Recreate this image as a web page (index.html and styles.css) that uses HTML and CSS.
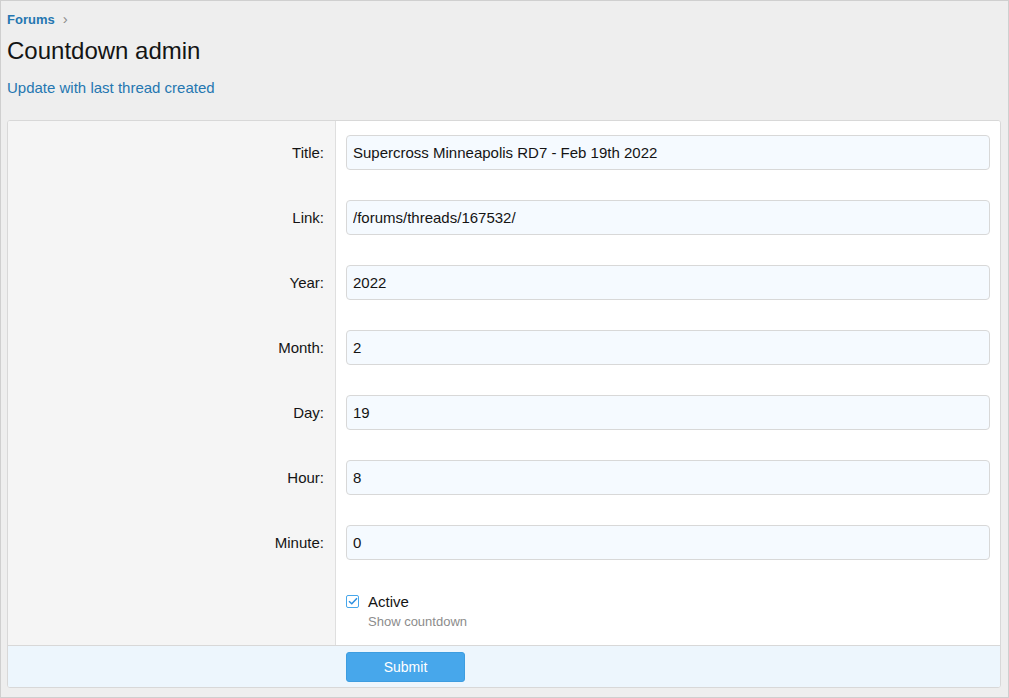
FILE: index.html
```html
<!DOCTYPE html>
<html>
<head>
<meta charset="utf-8">
<link rel="stylesheet" href="styles.css">
</head>
<body>
<div class="frame">
  <div class="crumbs"><a class="crumb" href="#">Forums</a><span class="chev">›</span></div>
  <h1 class="title">Countdown admin</h1>
  <a class="update" href="#">Update with last thread created</a>
  <form class="card">
    <div class="rows">
      <div class="row"><label class="lbl">Title:</label><div class="ctl"><input class="inp" value="Supercross Minneapolis RD7 - Feb 19th 2022"></div></div>
      <div class="row"><label class="lbl">Link:</label><div class="ctl"><input class="inp" value="/forums/threads/167532/"></div></div>
      <div class="row"><label class="lbl">Year:</label><div class="ctl"><input class="inp" value="2022"></div></div>
      <div class="row"><label class="lbl">Month:</label><div class="ctl"><input class="inp" value="2"></div></div>
      <div class="row"><label class="lbl">Day:</label><div class="ctl"><input class="inp" value="19"></div></div>
      <div class="row"><label class="lbl">Hour:</label><div class="ctl"><input class="inp" value="8"></div></div>
      <div class="row"><label class="lbl">Minute:</label><div class="ctl"><input class="inp" value="0"></div></div>
      <div class="row checkrow">
        <div class="lbl"></div>
        <div class="ctl">
          <div class="check">
            <span class="box"><svg width="10" height="8" viewBox="0 0 10 8"><path d="M1 4.2 L3.8 6.8 L9 1.2" fill="none" stroke="#2d8fe0" stroke-width="1.5"/></svg></span>
            <span class="ctext">Active</span>
          </div>
          <div class="hint">Show countdown</div>
        </div>
      </div>
    </div>
    <div class="foot">
      <div class="footpad"></div>
      <div class="footctl"><button type="button" class="btn">Submit</button></div>
    </div>
  </form>
</div>
</body>
</html>
```

FILE: styles.css
```css
html, body { margin: 0; padding: 0; }
body { font-family: "Liberation Sans", Arial, sans-serif; color: #141414; }
.frame {
  box-sizing: border-box;
  width: 1009px;
  height: 698px;
  border: 1px solid #cfcfcf;
  background: #eeeeee;
  padding: 8px 7px 0 6px;
}
.crumbs { display: flex; align-items: center; height: 20px; font-size: 13px; }
.crumb { color: #2577b1; font-weight: bold; text-decoration: none; }
.chev { color: #8c8c8c; margin-left: 8px; font-size: 15px; position: relative; top: -1px; }
.title { font-weight: normal; font-size: 24px; margin: 7px 0 0 0; line-height: 30px; }
.update { display: block; color: #2577b1; text-decoration: none; font-size: 15px; margin-top: 12px; line-height: 20px; }
.card {
  margin-top: 22px;
  background: #fff;
  border: 1px solid #d8d8d8;
  border-radius: 3px;
  overflow: hidden;
}
.rows { display: flex; flex-direction: column; background: linear-gradient(to right, #f5f5f5 0, #f5f5f5 327px, #dfdfdf 327px, #dfdfdf 328px, #fff 328px); padding-top: 14px; }
.row { display: flex; align-items: center; height: 35px; margin-bottom: 30px; }
.lbl { width: 327px; box-sizing: border-box; padding-right: 11px; text-align: right; font-size: 15px; color: #141414; flex: none; }
.ctl { flex: 1; padding: 0 10px 0 11px; }
.inp {
  box-sizing: border-box;
  width: 100%;
  height: 35px;
  border: 1px solid #d8d8d8;
  border-radius: 4px;
  background: #f5faff;
  font-family: "Liberation Sans", Arial, sans-serif;
  font-size: 15px;
  color: #141414;
  padding: 0 6px;
  outline: none;
}
.checkrow { height: auto; margin-bottom: 0; padding: 1px 0 16px; align-items: flex-start; }
.check { display: flex; align-items: center; height: 20px; }
.box {
  box-sizing: border-box;
  width: 13px; height: 13px;
  border: 1px solid #47a7eb;
  border-radius: 2px;
  display: flex; align-items: center; justify-content: center;
  background: #fff;
}
.ctext { margin-left: 9px; font-size: 15px; }
.hint { margin-left: 22px; font-size: 13px; color: #8c8c8c; margin-top: 3px; }
.foot { display: flex; background: #edf6fd; border-top: 1px solid #d8d8d8; height: 41px; align-items: center; }
.footpad { width: 327px; flex: none; }
.footctl { padding-left: 11px; }
.btn {
  width: 119px; height: 30px;
  background: #47a7eb;
  border: 1px solid #3d9de0;
  border-radius: 3px;
  color: #fff;
  font-family: "Liberation Sans", Arial, sans-serif;
  font-size: 14px;
}
```
